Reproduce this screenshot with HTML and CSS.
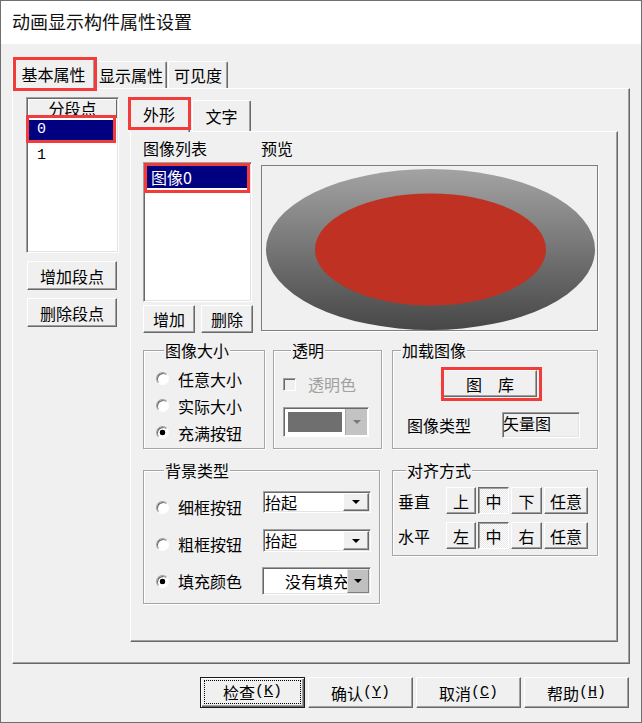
FILE: index.html
```html
<!DOCTYPE html>
<html lang="zh-CN">
<head>
<meta charset="utf-8">
<title>动画显示构件属性设置</title>
<link rel="stylesheet" href="styles.css">
</head>
<body>
<div class="window">
  <div class="titlebar">动画显示构件属性设置</div>
  <div class="dialog">
    <div class="outer-tabs">
      <div class="tab active hl hl-otab">基本属性</div>
      <div class="tab otab2">显示属性</div>
      <div class="tab otab3">可见度</div>
    </div>
    <div class="outer-panel">
      <div class="seg-col">
        <div class="listview">
          <div class="lv-header">分段点</div>
          <div class="lv-items">
            <div class="lv-item sel hl hl-seg">0</div>
            <div class="lv-item second">1</div>
          </div>
        </div>
        <button class="btn seg-btn">增加段点</button>
        <button class="btn seg-btn">删除段点</button>
      </div>
      <div class="right-col">
        <div class="inner-tabs">
          <div class="tab active hl hl-itab">外形</div>
          <div class="tab itab2">文字</div>
        </div>
        <div class="inner-panel">
          <div class="row-a">
            <div class="col-list">
              <div class="lbl">图像列表</div>
              <div class="imglist">
                <div class="img-item sel hl hl-img">图像0</div>
              </div>
              <div class="imgbtns">
                <button class="btn small-btn">增加</button>
                <button class="btn small-btn">删除</button>
              </div>
            </div>
            <div class="col-preview">
              <div class="lbl">预览</div>
              <div class="preview">
                <svg width="335" height="164" viewBox="0 0 335 164">
                  <defs>
                    <linearGradient id="gr" x1="0" y1="0" x2="0" y2="1">
                      <stop offset="0" stop-color="#a3a3a3"/>
                      <stop offset="1" stop-color="#474747"/>
                    </linearGradient>
                  </defs>
                  <ellipse cx="168.5" cy="83.5" rx="164.5" ry="80.5" fill="url(#gr)"/>
                  <ellipse cx="168.5" cy="83.5" rx="115.5" ry="56" fill="#bf3223"/>
                </svg>
              </div>
            </div>
          </div>

          <div class="row-b">
            <fieldset class="grp g-size">
              <legend>图像大小</legend>
              <div class="radio-row"><span class="radio"></span><span class="rtext">任意大小</span></div>
              <div class="radio-row"><span class="radio"></span><span class="rtext">实际大小</span></div>
              <div class="radio-row"><span class="radio on"></span><span class="rtext">充满按钮</span></div>
            </fieldset>
            <fieldset class="grp g-trans">
              <legend>透明</legend>
              <div class="check-row"><span class="checkbox"></span><span class="disabled">透明色</span></div>
              <div class="color-combo">
                <span class="swatch"></span>
                <span class="cbtn-dis"><i class="arrow arrow-gray"></i></span>
              </div>
            </fieldset>
            <fieldset class="grp g-load">
              <legend>加载图像</legend>
              <button class="btn lib-btn hl hl-lib">图　库</button>
              <div class="type-row">
                <span class="type-lbl">图像类型</span>
                <span class="type-field">矢量图</span>
              </div>
            </fieldset>
          </div>

          <div class="row-c">
            <fieldset class="grp g-bg">
              <legend>背景类型</legend>
              <div class="bg-row r1">
                <div class="bg-lbl"><span class="radio"></span><span class="rtext">细框按钮</span></div>
                <div class="combo c-small"><span class="ctext">抬起</span><span class="cbtn"><i class="arrow"></i></span></div>
              </div>
              <div class="bg-row r2">
                <div class="bg-lbl"><span class="radio"></span><span class="rtext">粗框按钮</span></div>
                <div class="combo c-small c2"><span class="ctext">抬起</span><span class="cbtn"><i class="arrow"></i></span></div>
              </div>
              <div class="bg-row r3">
                <div class="bg-lbl"><span class="radio on"></span><span class="rtext">填充颜色</span></div>
                <div class="combo c-fill"><span class="ctext fill-text">没有填充</span><span class="cbtn-flat"><i class="arrow"></i></span></div>
              </div>
            </fieldset>
            <fieldset class="grp g-align">
              <legend>对齐方式</legend>
              <div class="al-row">
                <span class="al-lbl">垂直</span>
                <button class="btn ab w30">上</button>
                <button class="btn ab w31 pressed">中</button>
                <button class="btn ab w31">下</button>
                <button class="btn ab w44">任意</button>
              </div>
              <div class="al-row second">
                <span class="al-lbl">水平</span>
                <button class="btn ab w30">左</button>
                <button class="btn ab w31 pressed">中</button>
                <button class="btn ab w31">右</button>
                <button class="btn ab w44">任意</button>
              </div>
            </fieldset>
          </div>
        </div>
      </div>
    </div>
    <div class="footer">
      <button class="btn fbtn default"><span class="focus">检查<span class="lat">(<u>K</u>)</span></span></button>
      <button class="btn fbtn">确认<span class="lat">(<u>Y</u>)</span></button>
      <button class="btn fbtn">取消<span class="lat">(<u>C</u>)</span></button>
      <button class="btn fbtn">帮助<span class="lat">(<u>H</u>)</span></button>
    </div>
  </div>
</div>
</body>
</html>
```

FILE: styles.css
```css
* { box-sizing: border-box; }
html, body { margin: 0; padding: 0; }
body {
  width: 642px;
  height: 723px;
  overflow: hidden;
  background: #f0f0f0;
  color: #000;
  font-family: "Noto Sans CJK SC", "Noto Sans", sans-serif;
  font-size: 16px;
}
.window {
  width: 642px;
  height: 723px;
  border: 1px solid #6f6f6f;
  display: flex;
  flex-direction: column;
  background: #f0f0f0;
}
.titlebar {
  flex: none;
  height: 43px;
  background: #fff;
  padding-left: 11px;
  font-size: 18px;
  line-height: 41px;
  color: #111;
}
.dialog {
  flex: 1;
  padding: 15px 12px 0 11px;
}

/* ---------- generic 3D controls ---------- */
.btn {
  font: inherit;
  color: #000;
  margin: 0;
  padding: 0;
  background: #f0f0f0;
  border: 1px solid;
  border-color: #fff #696969 #696969 #fff;
  box-shadow: inset -1px -1px 0 #a0a0a0;
  display: flex;
  align-items: center;
  justify-content: center;
  line-height: 16px;
}
.lat { font-family: "Liberation Mono", monospace; font-size: 15px; }

/* ---------- tabs ---------- */
.tab {
  background: #f0f0f0;
  border: 1px solid;
  border-color: #fff #696969 transparent #fff;
  border-bottom: none;
  border-radius: 2px 2px 0 0;
  box-shadow: inset -1px 0 0 #a0a0a0;
  text-align: center;
}
.outer-tabs {
  display: flex;
  align-items: flex-end;
  height: 29px;
}
.outer-tabs .tab { height: 27px; line-height: 26px; }
.outer-tabs .tab.active {
  width: 83px;
  height: 30px;
  line-height: 28px;
  margin-bottom: -1px;
  position: relative;
  z-index: 2;
}
.otab2 { width: 72px; }
.otab3 { width: 60px; margin-left: 1px; }

.outer-panel {
  width: 618px;
  height: 576px;
  border: 1px solid;
  border-color: #fff #696969 #696969 #fff;
  box-shadow: inset -1px -1px 0 #a0a0a0;
  display: flex;
  padding: 8px 0 0 13px;
}

/* ---------- segment column ---------- */
.seg-col { width: 93px; flex: none; }
.listview {
  height: 156px;
  background: #fff;
  border: 1px solid;
  border-color: #a0a0a0 #fff #fff #a0a0a0;
  box-shadow: inset 1px 1px 0 #696969, inset -1px -1px 0 #e3e3e3;
  padding: 1px;
}
.lv-header {
  height: 19px;
  line-height: 17px;
  text-align: center;
  background: #f0f0f0;
  border: 1px solid;
  border-color: #fff #696969 #696969 #fff;
}
.lv-items { padding: 2px 1px 0 1px; }
.lv-item {
  height: 20px;
  line-height: 20px;
  padding-left: 8px;
  font-family: "Liberation Mono", monospace;
  font-size: 15px;
}
.lv-item.second { margin-top: 6px; }
.sel { background: #000080; color: #fff; }
.seg-btn { width: 90px; height: 29px; margin: 8px 0 0 1px; }

/* ---------- right column / inner tabs ---------- */
.right-col { margin-left: 11px; width: 488px; flex: none; }
.inner-tabs {
  display: flex;
  align-items: flex-end;
  height: 34px;
}
.inner-tabs .tab.active {
  width: 62px;
  height: 35px;
  line-height: 33px;
  margin-left: -2px;
  margin-bottom: -1px;
  position: relative;
  z-index: 2;
}
.itab2 { width: 59px; height: 31px; line-height: 30px; margin-left: 2px; }

.inner-panel {
  height: 511px;
  border: 1px solid;
  border-color: #fff #696969 #696969 #fff;
  box-shadow: inset -1px -1px 0 #a0a0a0;
  padding: 8px 0 0 12px;
}
.lbl { height: 18px; line-height: 16px; }

.row-a { display: flex; }
.col-list { width: 110px; }
.imglist {
  width: 109px;
  height: 140px;
  margin-top: 4px;
  background: #fff;
  border: 1px solid;
  border-color: #a0a0a0 #fff #fff #a0a0a0;
  box-shadow: inset 1px 1px 0 #696969, inset -1px -1px 0 #e3e3e3;
  padding: 3px 1px 0 2px;
}
.img-item { height: 22px; line-height: 22px; padding-left: 5px; }
.imgbtns { display: flex; gap: 6px; margin-top: 3px; }
.small-btn { width: 52px; height: 28px; }

.col-preview { margin-left: 8px; }
.preview {
  margin-top: 7px;
  width: 337px;
  height: 166px;
  border: 1px solid #7d7d7d;
  box-shadow: 1px 1px 0 #fff;
  background: #f0f0f0;
}
.preview svg { display: block; }

/* ---------- group boxes ---------- */
.grp {
  margin: 0;
  padding: 0;
  min-width: 0;
  border: 1px solid #a5a5a5;
  box-shadow: 1px 1px 0 #fff, inset 1px 1px 0 #fff;
}
.grp legend {
  margin-left: 8px;
  padding: 0 1px;
  line-height: 16px;
  height: 16px;
  background: #f0f0f0;
}
.row-b { display: flex; margin-top: 9px; align-items: flex-start; }
.g-size { width: 122px; height: 107px; padding: 7px 0 0 12px; }
.g-trans { width: 109px; height: 107px; margin-left: 8px; padding: 14px 0 0 9px; }
.g-load { width: 206px; height: 107px; margin-left: 10px; padding: 12px 0 0 0; }

.radio-row { display: flex; align-items: center; height: 27px; }
.radio {
  flex: none;
  width: 13px;
  height: 13px;
  border-radius: 50%;
  border: 1px solid;
  border-color: #a0a0a0 #fff #fff #a0a0a0;
  box-shadow: inset 1px 1px 0 #696969;
  background: #fff;
}
.radio.on { background: radial-gradient(circle at 50% 50%, #000 0 2.6px, #fff 3.1px); }
.rtext { margin-left: 9px; line-height: 16px; white-space: nowrap; }

.check-row { display: flex; align-items: center; height: 24px; }
.checkbox {
  flex: none;
  width: 13px;
  height: 13px;
  border: 1px solid;
  border-color: #a0a0a0 #fff #fff #a0a0a0;
  box-shadow: inset 1px 1px 0 #696969;
  background: #f0f0f0;
}
.disabled { color: #a0a0a0; margin-left: 12px; line-height: 16px; }
.color-combo {
  margin-top: 11px;
  width: 86px;
  height: 30px;
  display: flex;
  border: 1px solid;
  border-color: #a0a0a0 #fff #fff #a0a0a0;
  box-shadow: inset 1px 1px 0 #696969;
  background: #fff;
  padding: 1px;
}
.swatch { width: 54px; height: 20px; margin: 3px 0 0 3px; background: #6f6f6f; }
.cbtn-dis {
  margin-left: auto;
  width: 22px;
  background: #c3c3c3;
  display: flex;
  align-items: center;
  justify-content: center;
  border-left: 1px solid #a8a8a8;
}

.lib-btn { width: 94px; height: 27px; margin-left: 50px; position: relative; }
.type-row { display: flex; align-items: center; margin-top: 15px; padding-left: 14px; }
.type-lbl { width: 64px; line-height: 16px; }
.type-field {
  margin-left: 31px;
  width: 78px;
  height: 26px;
  line-height: 20px;
  border: 1px solid;
  border-color: #a0a0a0 #fff #fff #a0a0a0;
  box-shadow: inset 1px 1px 0 #696969, inset -1px -1px 0 #e3e3e3;
  padding-left: 0;
  background: #f0f0f0;
}

.row-c { display: flex; margin-top: 13px; align-items: flex-start; }
.g-bg { width: 237px; height: 142px; padding: 0 0 0 12px; }
.g-align { width: 206px; height: 94px; margin-left: 12px; padding: 9px 0 0 5px; }

.bg-row { display: flex; align-items: flex-start; }
.bg-row.r1 { margin-top: 13px; }
.bg-row.r2 { margin-top: 14px; }
.bg-row.r3 { margin-top: 15px; }
.bg-lbl { width: 107px; height: 16px; display: flex; align-items: center; flex: none; }
.r1 .bg-lbl { margin-top: 8px; }
.r2 .bg-lbl { margin-top: 7px; }
.r3 .bg-lbl { margin-top: 6px; }

.combo {
  display: flex;
  background: #fff;
  border: 1px solid;
  border-color: #a0a0a0 #fff #fff #a0a0a0;
  box-shadow: inset 1px 1px 0 #696969, inset -1px -1px 0 #e3e3e3;
  padding: 1px;
}
.c-small { width: 108px; height: 22px; }
.c-small.c2 { height: 23px; }
.c-fill { width: 109px; height: 28px; margin-left: -1px; }
.ctext { flex: 1; line-height: 18px; white-space: nowrap; }
.fill-text { padding-left: 21px; line-height: 24px; overflow: hidden; min-width: 0; }
.cbtn {
  flex: none;
  width: 26px;
  background: #f0f0f0;
  border: 1px solid;
  border-color: #fff #696969 #696969 #fff;
  box-shadow: inset -1px -1px 0 #a0a0a0;
  display: flex;
  align-items: center;
  justify-content: center;
}
.cbtn-flat {
  flex: none;
  width: 22px;
  background: #c0c0c0;
  border: 1px solid;
  border-color: #e3e3e3 #808080 #808080 #e3e3e3;
  display: flex;
  align-items: center;
  justify-content: center;
}
.arrow {
  display: block;
  width: 0;
  height: 0;
  border-left: 4px solid transparent;
  border-right: 4px solid transparent;
  border-top: 4px solid #000;
}
.arrow-gray { border-top-color: #7a7a7a; }

.al-row { display: flex; align-items: center; height: 27px; }
.al-row.second { margin-top: 8px; }
.al-lbl { width: 32px; line-height: 16px; margin-right: 16px; }
.ab { height: 27px; margin-right: 2px; }
.w30 { width: 30px; }
.w31 { width: 31px; }
.w44 { width: 44px; }
.pressed {
  border-color: #696969 #fff #fff #696969;
  box-shadow: inset 1px 1px 0 #a0a0a0;
  background: repeating-conic-gradient(#ffffff 0 25%, #e6e6e6 0 50%) 0 0 / 2px 2px;
}

/* ---------- footer ---------- */
.footer {
  display: flex;
  justify-content: flex-end;
  gap: 3px;
  margin-top: 13px;
}
.fbtn { width: 105px; height: 31px; }
.fbtn.default {
  border: 1px solid #1a1a1a;
  box-shadow: inset 1px 1px 0 #fff, inset -1px -1px 0 #696969, inset -2px -2px 0 #a0a0a0;
  padding: 2px 3px 3px 3px;
}
.focus {
  display: flex;
  align-items: center;
  justify-content: center;
  width: 100%;
  height: 100%;
  border: 1px dotted #000;
}

/* ---------- red annotation boxes ---------- */
.hl { position: relative; }
.hl::after {
  content: "";
  position: absolute;
  border: 3px solid #f23c3c;
  pointer-events: none;
  z-index: 5;
}
.hl-otab::after { left: 0; right: -3px; top: -3px; bottom: -2px; }
.hl-itab::after { left: -1px; right: -2px; top: -1px; bottom: 2px; }
.hl-seg::after { left: -3px; right: 0; top: -5px; bottom: -3px; }
.hl-img::after { left: -2px; right: 0; top: -3px; bottom: -5px; }
.hl-lib::after { left: -3px; right: -6px; top: -4px; bottom: -5px; }
```
